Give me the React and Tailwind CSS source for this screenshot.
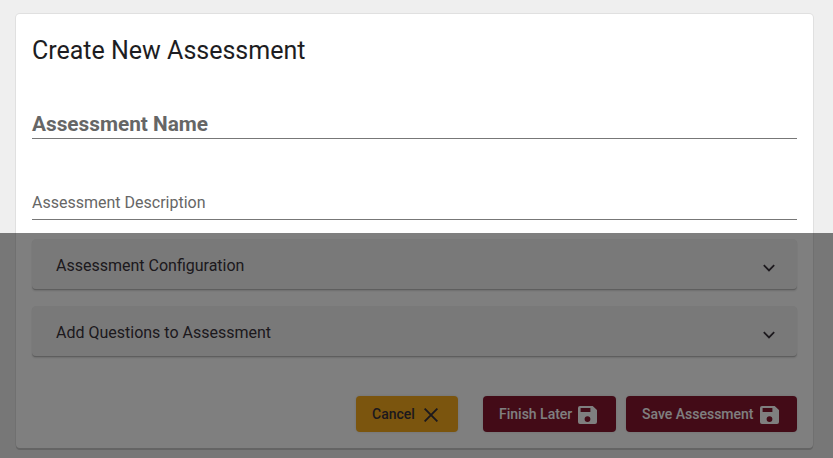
import React from "react";

function SaveIcon() {
  return (
    <svg viewBox="0 0 19 18" className="mt-[2px] h-[18px] w-[19px] shrink-0" fill="currentColor">
      <path fillRule="evenodd" d="M2 0H14.7L19 4V16a2 2 0 0 1-2 2H2a2 2 0 0 1-2-2V2a2 2 0 0 1 2-2ZM2.6 2V6H12.4V2ZM9.5 10.2a2.9 2.9 0 1 0 0 5.8 2.9 2.9 0 0 0 0-5.8Z" />
    </svg>
  );
}

function Panel({ title }) {
  return (
    <div className="flex h-[50px] items-center justify-between rounded-[4px] bg-[#f3f3f3] pr-[21px] pl-6 text-[#39323b] shadow-[0_2px_0_-1px_#bcbcbc,0_1px_0_0_#c6c6c6,0_2px_2px_0_rgba(0,0,0,0.14)]">
      <span className="mt-[4px] text-[16px] leading-6">{title}</span>
      <svg viewBox="0 0 14 10" className="mt-[8px] h-[10px] w-[14px]" fill="none" stroke="currentColor" strokeWidth="1.8">
        <path d="M1.8 2.2 7 7.4l5.2-5.2" />
      </svg>
    </div>
  );
}

function Button({ children, className }) {
  return (
    <button className={`flex h-9 items-center rounded-[4px] pl-4 text-[14px] font-medium shadow-[0_0_3px_0_rgba(0,0,0,0.12)] ${className}`}>
      {children}
    </button>
  );
}

export default function App() {
  return (
    <div className="relative h-[458px] w-[833px] overflow-hidden bg-[#efefef] pt-[14px] pl-4 font-['Roboto',sans-serif] text-[#1d1d22]">
      <main className="flex h-[434px] w-[797px] flex-col rounded-[4px] bg-white px-4 shadow-[0_2px_0_0_#c8c8c8,0_0_0_1px_#e0e0e0]">
        <h1 className="mt-[21px] h-8 text-[25px] leading-8 whitespace-nowrap">Create New Assessment</h1>
        <div className="mt-[45px] flex h-[27px] items-end border-b border-[#777] text-[20.8px] leading-[28px] font-bold text-[#666]">
          Assessment Name
        </div>
        <div className="mt-[52px] h-[29px] border-b border-[#777] text-[16px] leading-6 text-[#666]">
          Assessment Description
        </div>
        <div className="mt-[19px] flex flex-col gap-[17px]">
          <Panel title="Assessment Configuration" />
          <Panel title="Add Questions to Assessment" />
        </div>
        <div className="mt-[40px] flex justify-end">
          <Button className="mr-[25px] w-[102px] bg-[#f6ab1c] text-[#39323b]">
            <span>Cancel</span>
            <svg viewBox="0 0 14 14" className="mt-[2px] ml-[9px] h-[14px] w-[14px]" fill="none" stroke="currentColor" strokeWidth="1.9">
              <path d="m.6.6 12.8 12.8M13.4.6.6 13.4" />
            </svg>
          </Button>
          <Button className="mr-[10px] w-[133px] gap-[6px] bg-[#86162f] text-white">
            <span>Finish Later</span>
            <SaveIcon />
          </Button>
          <Button className="w-[171px] gap-[6px] bg-[#86162f] text-white">
            <span>Save Assessment</span>
            <SaveIcon />
          </Button>
        </div>
      </main>
      <div className="absolute inset-x-0 top-[233px] bottom-0 bg-black/50" />
    </div>
  );
}
